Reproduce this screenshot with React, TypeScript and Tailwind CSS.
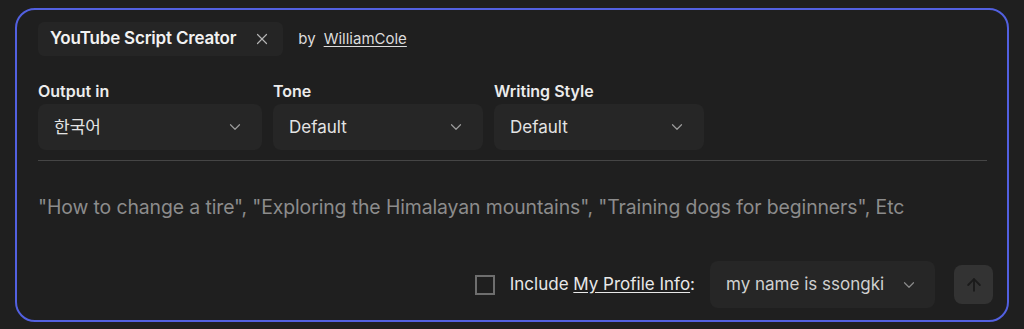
import { X, ChevronDown, ArrowUp } from "lucide-react";

const font = { fontFamily: "Inter, 'Noto Sans CJK KR', sans-serif" };

function Select({ label, value, width }: { label?: string; value: string; width: string }) {
  return (
    <div className="flex flex-col gap-[3px]">
      {label && <span className="text-[16px] font-semibold leading-[20px] text-[#ececec]">{label}</span>}
      <div className={`flex h-[46px] items-center justify-between rounded-lg bg-[#262626] pl-4 pr-[18px] ${width}`}>
        <span className="pt-px text-[17px] text-[#e3e3e3]">{value}</span>
        <ChevronDown className="h-[18px] w-[18px] text-[#9b9b9b]" strokeWidth={1.6} />
      </div>
    </div>
  );
}

export default function App() {
  return (
    <div className="h-[329px] w-[1024px] bg-[#1f1f1f] px-[15px] pt-[8px]" style={font}>
      <div className="h-[314px] rounded-[20px] border-2 border-[#5260e0] bg-[#1f1f1f] pl-[21px] pr-[14px] pt-[12px]">
        {/* header */}
        <div className="flex items-center">
          <div className="flex h-[34px] items-center gap-[17px] rounded-md bg-[#252525] pl-[12px] pr-[12px]">
            <span className="text-[17px] font-semibold tracking-[-0.2px] text-[#f2f2f2]">YouTube Script Creator</span>
            <X className="h-[18px] w-[18px] text-[#b4b4b4]" strokeWidth={1.6} />
          </div>
          <span className="ml-[15px] text-[15px] text-[#dcdcdc]">by</span>
          <span className="ml-[8px] text-[15px] text-[#dcdcdc] underline underline-offset-2">WilliamCole</span>
        </div>

        {/* selects */}
        <div className="mt-[25px] flex gap-[11px]">
          <Select label="Output in" value="한국어" width="w-[224px]" />
          <Select label="Tone" value="Default" width="w-[210px]" />
          <Select label="Writing Style" value="Default" width="w-[210px]" />
        </div>

        <div className="mt-[10px] h-px w-[949px] bg-[#454545]" />

        <div className="mt-[32px] text-[19.4px] text-[#8c8c8c] tracking-[-0.1px]">
          "How to change a tire", "Exploring the Himalayan mountains", "Training dogs for beginners", Etc
        </div>

        {/* footer */}
        <div className="mt-[39px] flex items-center justify-end">
          <div className="h-[20px] w-[20px] border-2 border-[#6e6e6e]" />
          <span className="ml-[15px] text-[17px] text-[#e8e8e8]">
            Include <span className="underline underline-offset-2">My Profile Info</span>:
          </span>
          <div className="ml-[15px] flex h-[47px] w-[225px] items-center justify-between rounded-lg bg-[#262626] pl-[16px] pr-[17px]">
            <span className="text-[17px] text-[#d0d0d0]">my name is ssongki</span>
            <ChevronDown className="h-[18px] w-[18px] text-[#8a8a8a]" strokeWidth={1.6} />
          </div>
          <div className="ml-[19px] flex h-[39px] w-[39px] items-center justify-center rounded-lg bg-[#333333]">
            <ArrowUp className="h-[20px] w-[20px] text-[#1b1b1b]" strokeWidth={2.2} />
          </div>
        </div>
      </div>
    </div>
  );
}
